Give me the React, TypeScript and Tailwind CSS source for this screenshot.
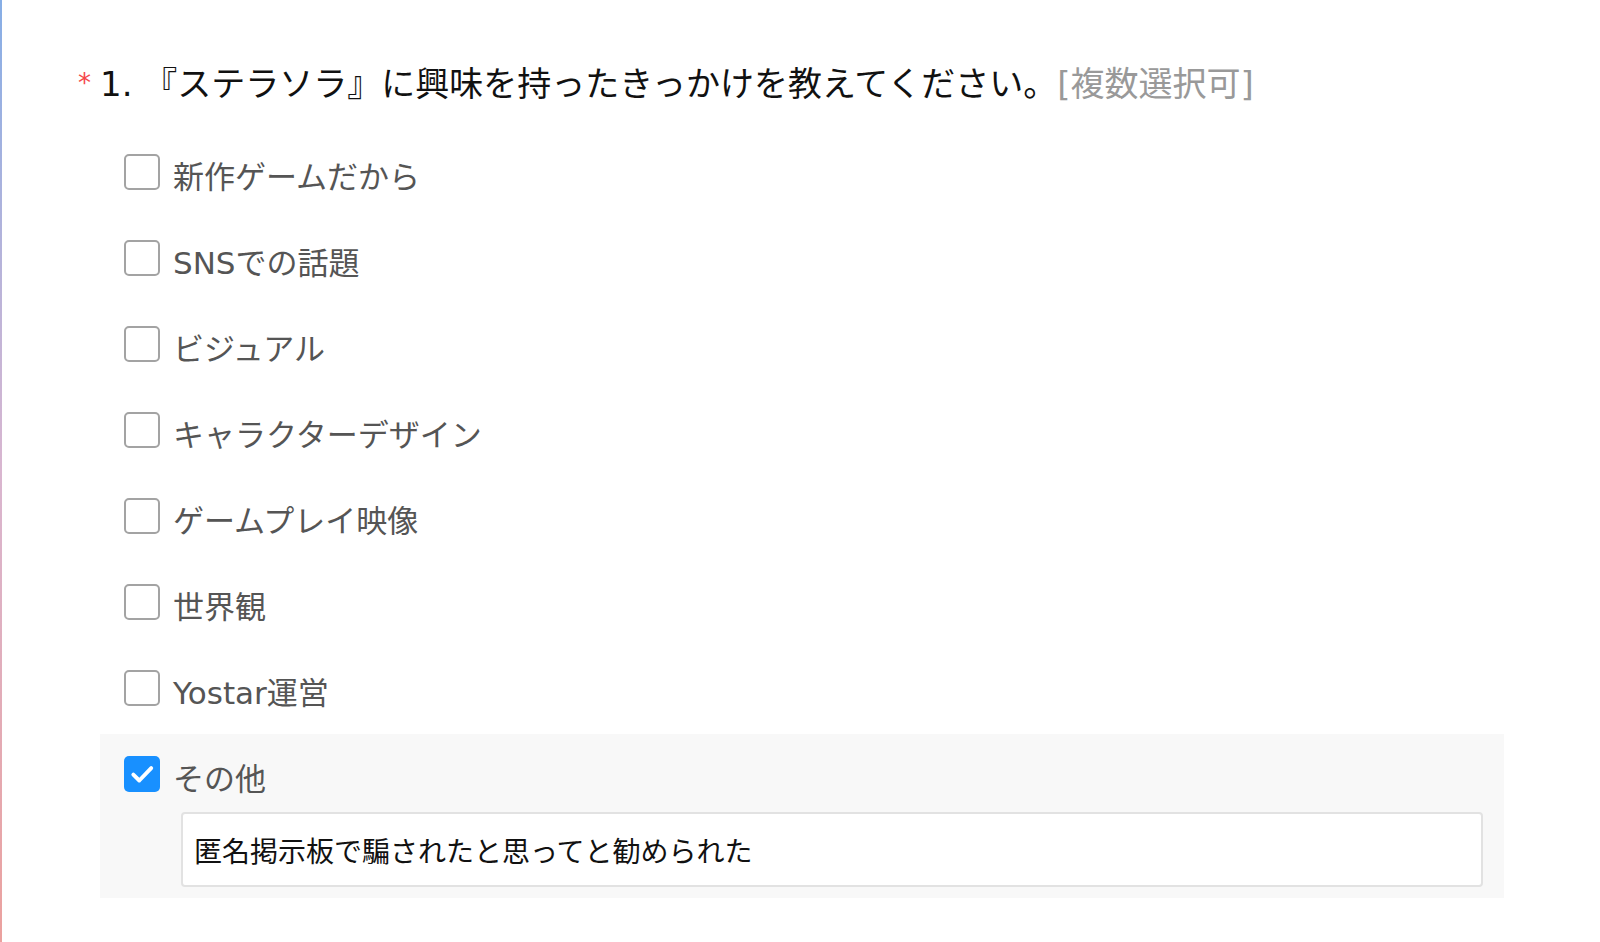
import { useState } from "react";

const OPTIONS = [
  "新作ゲームだから",
  "SNSでの話題",
  "ビジュアル",
  "キャラクターデザイン",
  "ゲームプレイ映像",
  "世界観",
  "Yostar運営",
];

function Box({ checked }: { checked: boolean }) {
  if (checked) {
    return (
      <span className="flex h-[36px] w-[36px] shrink-0 items-center justify-center rounded-[5px] bg-[#1890ff]">
        <svg viewBox="0 0 24 24" className="h-[26px] w-[26px]" fill="none">
          <path d="M4 12.5L9.5 18L20.5 6.5" stroke="#fff" strokeWidth="3.6" strokeLinecap="round" strokeLinejoin="round" />
        </svg>
      </span>
    );
  }
  return <span className="block h-[36px] w-[36px] shrink-0 rounded-[5px] border-2 border-[#a3a3a3] bg-white" />;
}

export default function App() {
  const [other, setOther] = useState("匿名掲示板で騙されたと思ってと勧められた");

  return (
    <div className="flex min-h-screen bg-white font-['DejaVu_Sans','Noto_Sans_CJK_JP',sans-serif] font-normal">
      <div className="w-[2px] shrink-0 bg-gradient-to-b from-[#86aee6] via-[#d9b6d0] to-[#eba19e]" />
      <div className="flex-1 pl-[98px] pt-[64px]">
        <div className="relative flex items-center text-[34px] leading-[40px] text-[#111]">
          <span className="absolute left-[-22px] top-[-1px] text-[26px] text-[#f5474a]">*</span>
          <span>1. 『ステラソラ』に興味を持ったきっかけを教えてください。</span>
          <span className="text-[#999]">[複数選択可]</span>
        </div>

        <div className="mt-[28px] w-[1404px]">
          {OPTIONS.map((o) => (
            <div key={o} className="flex h-[86px] items-start px-[24px] pt-[22px]">
              <Box checked={false} />
              <span className="ml-[13px] mt-[5px] text-[31px] leading-[36px] text-[#555]">{o}</span>
            </div>
          ))}
          <div className="bg-[#f8f8f8] px-[24px] pb-[11px] pt-[22px]">
            <div className="flex items-start">
              <Box checked={true} />
              <span className="ml-[13px] mt-[5px] text-[31px] leading-[36px] text-[#555]">その他</span>
            </div>
            <div className="ml-[57px] mr-[-3px] mt-[15px]">
              <input
                value={other}
                onChange={(e) => setOther(e.target.value)}
                className="h-[75px] w-full rounded-[4px] border-2 border-[#e2e2e2] bg-white px-[11px] font-['Noto_Sans_CJK_JP',sans-serif] text-[28px] font-normal text-[#111] outline-none"
              />
            </div>
          </div>
        </div>
      </div>
    </div>
  );
}
